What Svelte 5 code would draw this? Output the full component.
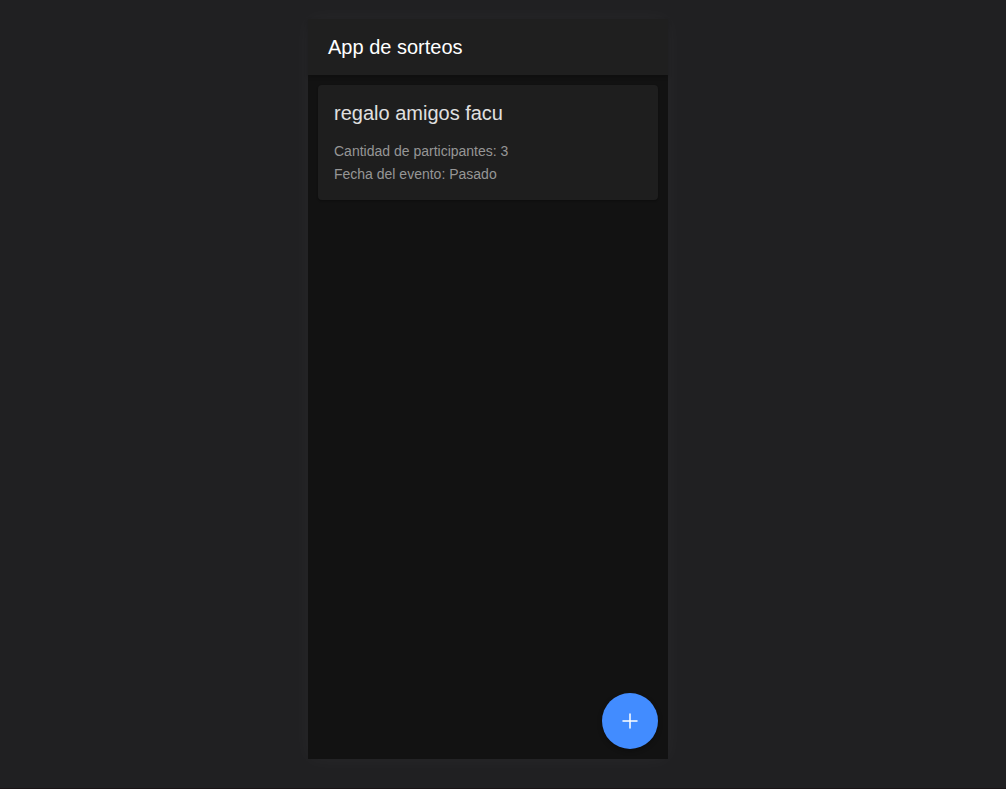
<script>
  const raffles = [
    { name: 'regalo amigos facu', participants: 3, date: 'Pasado' }
  ];
</script>

<div class="stage">
  <div class="device">
    <header class="toolbar">
      <h1>App de sorteos</h1>
    </header>

    <main class="content">
      {#each raffles as raffle}
        <article class="card">
          <h2>{raffle.name}</h2>
          <p>Cantidad de participantes: {raffle.participants}</p>
          <p>Fecha del evento: {raffle.date}</p>
        </article>
      {/each}
    </main>

    <button class="fab" type="button" aria-label="Agregar sorteo">
      <svg viewBox="0 0 24 24" width="24" height="24" aria-hidden="true">
        <path d="M12 5v14M5 12h14" />
      </svg>
    </button>
  </div>
</div>

<style>
  :global(body) {
    margin: 0;
    background: #202022;
  }

  .stage {
    box-sizing: border-box;
    display: flex;
    justify-content: center;
    min-height: 100vh;
    padding: 19px 30px 29px 0;
    border-bottom: 1px solid #1a1517;
    background: #202022;
    font-family: "Liberation Sans", Arial, sans-serif;
  }

  .device {
    position: relative;
    display: flex;
    flex-direction: column;
    width: 100%;
    max-width: 360px;
    background: #121212;
    box-shadow: 0 0 20px rgba(255, 255, 255, 0.04);
  }

  .toolbar {
    display: flex;
    align-items: center;
    min-height: 56px;
    padding: 0 20px;
    background: #1f1f1f;
    box-shadow: 0 2px 4px rgba(0, 0, 0, 0.2);
  }

  h1,
  h2,
  p {
    margin: 0;
    font-weight: 400;
  }

  h1 {
    color: #ffffff;
    font-size: 20px;
    font-weight: 500;
    line-height: 24px;
  }

  .content {
    display: flex;
    flex: 1;
    flex-direction: column;
    gap: 10px;
    padding: 10px;
  }

  .card {
    padding: 16px 16px 14px;
    border-radius: 4px;
    background: #1e1e1e;
    box-shadow: 0 1px 2px rgba(0, 0, 0, 0.3);
    color: #969696;
  }

  h2 {
    margin-bottom: 15px;
    color: #e0e0e0;
    font-size: 20px;
    line-height: 24px;
  }

  p {
    font-size: 14px;
    line-height: 23px;
  }

  .fab {
    position: absolute;
    right: 10px;
    bottom: 10px;
    display: grid;
    place-items: center;
    width: 56px;
    height: 56px;
    padding: 0;
    border: 0;
    border-radius: 50%;
    background: #428cff;
    box-shadow: 0 2px 5px rgba(0, 0, 0, 0.3);
    cursor: pointer;
  }

  .fab path {
    fill: none;
    stroke: #ffffff;
    stroke-width: 1.5;
    stroke-linecap: round;
  }
</style>
